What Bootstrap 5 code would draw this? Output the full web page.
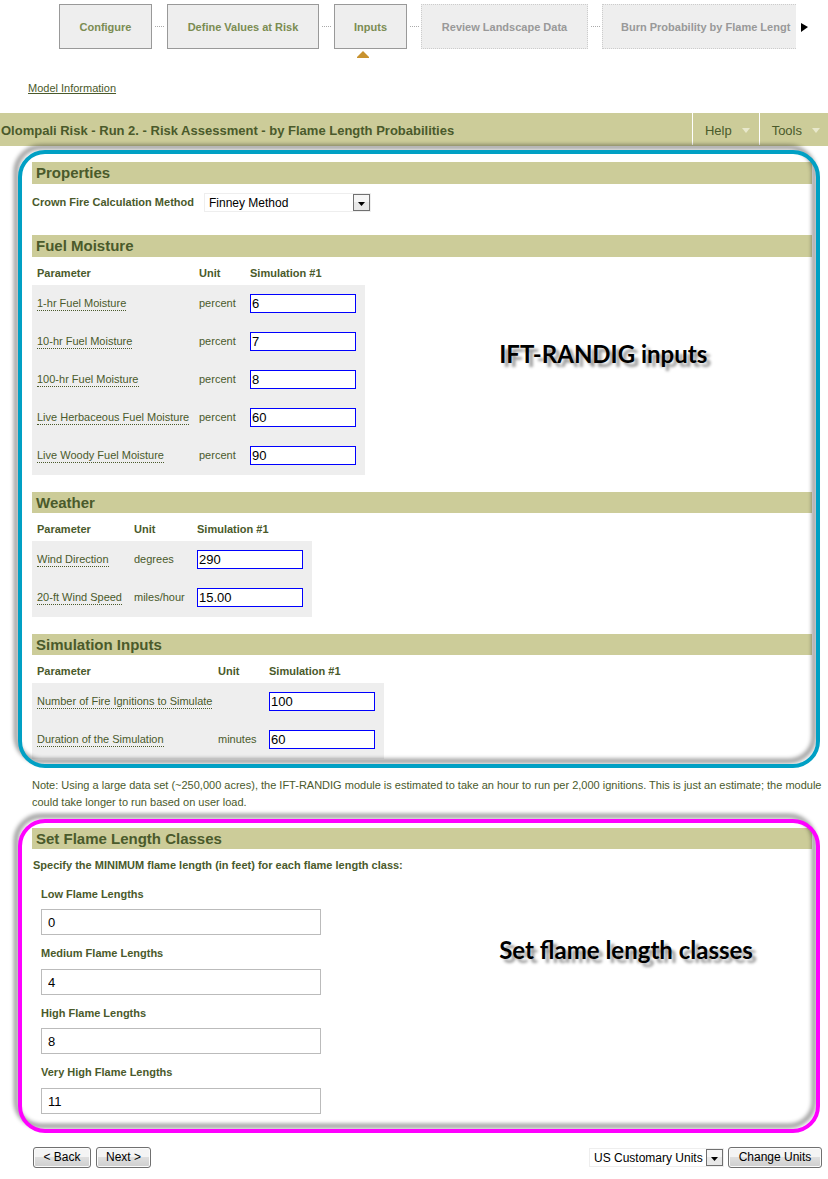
<!DOCTYPE html>
<html lang="en">
<head>
<meta charset="utf-8">
<meta name="viewport" content="width=device-width, initial-scale=1">
<title>Olompali Risk - Inputs</title>
<link href="https://cdn.jsdelivr.net/npm/bootstrap@5.3.0/dist/css/bootstrap.min.css" rel="stylesheet">
<style>
  :root { --olive: #cccc99; --ink: #4a5a2b; --grey: #eeeeee; }
  body { font-family: "Liberation Sans", Arial, sans-serif; font-size: 11px; line-height: 17px; color: var(--ink); background: #fff; }

  /* Workflow steps */
  .steps { padding: 4px 20px 0 59px; height: 60px; }
  .step-track { min-width: 0; overflow: hidden; }
  .step { flex: none; height: 45px; padding: 2px 18px 0; border: 1px solid #999; border-radius: 0; background: var(--grey); color: #7b8c52; font-size: 11px; font-weight: 700; white-space: nowrap; }
  .step:disabled { border: 1px dotted #ccc; color: #999; opacity: 1; }
  .step-link { flex: none; width: 9px; margin: 0 3px; border-top: 1px dotted #aaa; }
  .step-link.later { margin-right: 2px; }
  .step-now { position: relative; }
  .step-marker { position: absolute; top: 100%; left: 50%; margin: 3px 0 0 -14px; }
  .w-configure { width: 93px; } .w-values { width: 152px; } .w-inputs { width: 73px; } .w-review { width: 167px; } .w-burn { width: 250px; text-align: left; }
  .step-next { padding: 0; margin-left: 5px; line-height: 0; }

  .model-link { padding: 20px 28px 16px; }
  .model-link a { color: var(--ink); }

  /* Title bar */
  .title-bar { background: var(--olive); height: 33px; }
  .title-bar h1 { font-size: 13px; font-weight: 700; padding: 2px 0 0 1px; }
  .bar-menu { height: 32px; border: 0; border-left: 1px solid #fff; border-radius: 0; padding: 2px 9px 0 12px; font-size: 13px; color: var(--ink); background: transparent; }
  .bar-menu svg { margin-left: 10px; }
  .bar-menu.tools { padding-right: 8px; }

  /* Outlined groups: the ring and its shadow lie over the content */
  .ring { position: relative; margin: 4px 8px 0 18px; padding: 12px 8px 9px 14px; }
  .ring::after { content: ""; position: absolute; inset: 0; border: 4px solid #00a0c4; border-radius: 27px; filter: drop-shadow(-4px -5px 2px rgba(0,0,0,.45)); pointer-events: none; }
  .ring.pink { margin-top: 8px; padding: 9px 8px 19px 14px; }
  .ring.pink::after { border-color: #f0f; }
  .callout { position: absolute; left: 60%; color: #000; font-family: Lato, sans-serif; font-size: 24px; line-height: 24px; font-weight: 700; text-shadow: 4px 4px 3px rgba(0,0,0,.4); white-space: nowrap; }
  .callout.first { top: 31%; } .callout.second { top: 38%; }

  .band { background: var(--olive); font-size: 15px; line-height: 22px; font-weight: 700; padding-left: 4px; margin: 0; }
  .band.slim { line-height: 21px; }
  .method { padding: 9px 0 23px; }
  .method label { font-weight: 700; width: 172px; white-space: nowrap; }

  .params { table-layout: fixed; margin: 0 0 17px; color: var(--ink); }
  .params th, .params td { padding: 0 0 0 5px; white-space: nowrap; }
  .params thead th { height: 28px; padding-top: 4px; }
  .params tbody td, .params tbody th { height: 38px; padding-bottom: 1px; background: var(--grey); font-weight: 400; }
  .params .term { border-bottom: 1px dotted var(--ink); display: inline-block; line-height: 14px; }
  .params .num { display: block; width: 106px; height: 19px; padding: 0 1px; border: 1px solid #00f; background: #fff; color: #000; font-size: 13px; line-height: 17px; }
  .params.last { margin: 0; }
  .c-fuel { width: 162px; } .c-wind { width: 97px; } .c-sim { width: 181px; }
  .c-unit { width: 51px; } .c-unit-wide { width: 63px; } .c-value { width: 120px; }

  .note { margin: 9px 4px 0 32px; }

  .classes { padding: 0 9px; }
  .lead-in { font-weight: 700; margin: 8px 0 12px 1px; }
  .classes label { display: block; font-weight: 700; margin-bottom: 6px; }
  .classes input { display: block; width: 280px; height: 26px; margin-bottom: 10px; padding: 1px 6px; border: 1px solid #bbb; color: #000; font-size: 13px; }
  .classes div:nth-child(even) label { margin-bottom: 7px; }
  .classes div:last-child input { margin-bottom: 0; }

  .pick { appearance: none; height: 19px; border: 1px solid #eee; border-radius: 0; padding: 0 20px 0 4px; color: #000; font-size: 12px; line-height: 16px;
    background: #fff url("data:image/svg+xml,%3Csvg xmlns='http://www.w3.org/2000/svg' width='17' height='17'%3E%3Crect x='.5' y='.5' width='16' height='16' fill='%23e8e8e8' stroke='%23707070'/%3E%3Cpath d='M1 1h15v7H1z' fill='%23f5f5f5'/%3E%3Cpath d='M5 8h7L8.500 12z'/%3E%3C/svg%3E") no-repeat right center; }
  .pick-method { width: 167px; }
  .pick-units { width: 135px; }
  .push { height: 21px; padding: 0; border: 1px solid #707070; border-radius: 3px; color: #000; font-size: 12px; line-height: 17px; background: linear-gradient(#f4f4f4 0 48%, #dedede 50%, #cfcfcf); box-shadow: inset 0 0 0 1px #fbfbfb; }
  .actions { padding: 14px 6px 11px 33px; }
  .w-back { width: 58px; margin-right: 5px; } .w-next { width: 55px; } .w-change { width: 94px; }
</style>
</head>
<body>
<nav class="steps d-flex align-items-start" aria-label="Steps">
  <div class="step-track d-flex align-items-center flex-grow-1 pb-3">
    <button class="step w-configure" type="button">Configure</button><span class="step-link"></span>
    <button class="step w-values" type="button">Define Values at Risk</button><span class="step-link"></span>
    <button class="step step-now w-inputs" type="button" aria-current="step">Inputs<svg class="step-marker" width="12" height="7" aria-hidden="true"><path d="M6 0 12 6V7H0V6z" fill="#c8922e"/></svg></button><span class="step-link later"></span>
    <button class="step w-review" type="button" disabled>Review Landscape Data</button><span class="step-link later"></span>
    <button class="step w-burn" type="button" disabled>Burn Probability by Flame Lengt</button>
  </div>
  <button class="btn step-next border-0 align-self-start mt-3" type="button" aria-label="More steps"><svg width="7" height="14" aria-hidden="true"><path d="M0 3 7 7 0 12z"/></svg></button>
</nav>
<div class="model-link"><a href="#">Model Information</a></div>

<header class="title-bar d-flex">
  <h1 class="m-0 flex-grow-1 align-self-center">Olompali Risk - Run 2. - Risk Assessment - by Flame Length Probabilities</h1>
  <button class="bar-menu" type="button">Help<svg width="8" height="8" aria-hidden="true"><path d="M0 1h8L4 6z" fill="#e8e8cc"/></svg></button>
  <button class="bar-menu tools" type="button">Tools<svg width="8" height="8" aria-hidden="true"><path d="M0 1h8L4 6z" fill="#e8e8cc"/></svg></button>
</header>

<main>
  <section class="ring">
    <h2 class="band">Properties</h2>
    <div class="method d-flex align-items-center">
      <label for="method">Crown Fire Calculation Method</label>
      <select class="pick pick-method" id="method"><option>Finney Method</option></select>
    </div>

    <h2 class="band">Fuel Moisture</h2>
    <table class="params">
      <colgroup><col class="c-fuel"><col class="c-unit"><col class="c-value"></colgroup>
      <thead><tr><th>Parameter</th><th>Unit</th><th>Simulation #1</th></tr></thead>
      <tbody>
        <tr><th><label class="term" for="f1">1-hr Fuel Moisture</label></th><td>percent</td><td><input class="num" id="f1" value="6"></td></tr>
        <tr><th><label class="term" for="f10">10-hr Fuel Moisture</label></th><td>percent</td><td><input class="num" id="f10" value="7"></td></tr>
        <tr><th><label class="term" for="f100">100-hr Fuel Moisture</label></th><td>percent</td><td><input class="num" id="f100" value="8"></td></tr>
        <tr><th><label class="term" for="herb">Live Herbaceous Fuel Moisture</label></th><td>percent</td><td><input class="num" id="herb" value="60"></td></tr>
        <tr><th><label class="term" for="woody">Live Woody Fuel Moisture</label></th><td>percent</td><td><input class="num" id="woody" value="90"></td></tr>
      </tbody>
    </table>

    <h2 class="band slim">Weather</h2>
    <table class="params">
      <colgroup><col class="c-wind"><col class="c-unit-wide"><col class="c-value"></colgroup>
      <thead><tr><th>Parameter</th><th>Unit</th><th>Simulation #1</th></tr></thead>
      <tbody>
        <tr><th><label class="term" for="dir">Wind Direction</label></th><td>degrees</td><td><input class="num" id="dir" value="290"></td></tr>
        <tr><th><label class="term" for="speed">20-ft Wind Speed</label></th><td>miles/hour</td><td><input class="num" id="speed" value="15.00"></td></tr>
      </tbody>
    </table>

    <h2 class="band slim">Simulation Inputs</h2>
    <table class="params last">
      <colgroup><col class="c-sim"><col class="c-unit"><col class="c-value"></colgroup>
      <thead><tr><th>Parameter</th><th>Unit</th><th>Simulation #1</th></tr></thead>
      <tbody>
        <tr><th><label class="term" for="ign">Number of Fire Ignitions to Simulate</label></th><td></td><td><input class="num" id="ign" value="100"></td></tr>
        <tr><th><label class="term" for="dur">Duration of the Simulation</label></th><td>minutes</td><td><input class="num" id="dur" value="60"></td></tr>
      </tbody>
    </table>
    <div class="callout first">IFT-RANDIG inputs</div>
  </section>

  <p class="note">Note: Using a large data set (~250,000 acres), the IFT-RANDIG module is estimated to take an hour to run per 2,000 ignitions. This is just an estimate; the module could take longer to run based on user load.</p>

  <section class="ring pink">
    <h2 class="band slim">Set Flame Length Classes</h2>
    <p class="lead-in">Specify the MINIMUM flame length (in feet) for each flame length class:</p>
    <div class="classes">
      <div><label for="low">Low Flame Lengths</label><input id="low" value="0"></div>
      <div><label for="medium">Medium Flame Lengths</label><input id="medium" value="4"></div>
      <div><label for="high">High Flame Lengths</label><input id="high" value="8"></div>
      <div><label for="vhigh">Very High Flame Lengths</label><input id="vhigh" value="11"></div>
    </div>
    <div class="callout second">Set flame length classes</div>
  </section>
</main>

<footer class="actions d-flex align-items-center">
  <button class="push w-back" type="button">&lt; Back</button>
  <button class="push w-next" type="button">Next &gt;</button>
  <select class="pick pick-units ms-auto me-1" aria-label="Units"><option>US Customary Units</option></select>
  <button class="push w-change" type="button">Change Units</button>
</footer>
<script src="https://cdn.jsdelivr.net/npm/bootstrap@5.3.0/dist/js/bootstrap.bundle.min.js"></script>
</body>
</html>
